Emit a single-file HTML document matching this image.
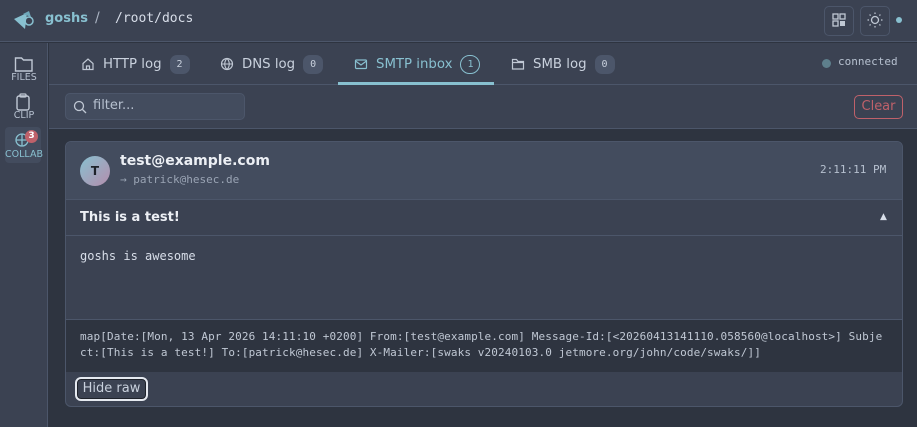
<!DOCTYPE html>
<html><head><meta charset="utf-8"><style>
*{box-sizing:border-box;margin:0;padding:0}
body{width:917px;height:427px;overflow:hidden;background:#2e3440;font-family:"DejaVu Sans","Liberation Sans",sans-serif;color:#d8dee9;position:relative}
.mono{font-family:"DejaVu Sans Mono","Liberation Mono",monospace}
.hdr{position:absolute;left:0;top:0;width:917px;height:42px;background:#3b4252;border-bottom:1px solid #4c566a}
.side{position:absolute;left:0;top:43px;width:48px;height:384px;background:#3b4252;border-right:1px solid #4c566a}
.tabs{position:absolute;left:49px;top:43px;width:868px;height:42px;background:#3b4252;border-bottom:1px solid #4c566a}
.filt{position:absolute;left:49px;top:85px;width:868px;height:44px;background:#3b4252;border-bottom:1px solid #4c566a}
.tab{position:absolute;top:0;height:42px;display:flex;align-items:center;font-size:13.3px;color:#c9d1dd}
.badge{display:inline-block;margin-left:8px;height:19px;min-width:20px;padding:0 6px;border-radius:7px;background:#4c566a;font-family:"DejaVu Sans Mono",monospace;font-size:10px;line-height:19px;text-align:center;color:#c9d1dd}
.card{position:absolute;left:65px;top:141px;width:838px;height:266px;background:#3b4252;border:1px solid #4c566a;border-radius:6px;overflow:hidden}
.sl{position:absolute;width:48px;text-align:center;font-size:9.5px;color:#b6c0cf}
</style></head><body>
<div class="hdr">
<svg style="position:absolute;left:13px;top:9px" width="22" height="22" viewBox="0 0 22 22"><path d="M1 10 L14 4 L12 20 Z" fill="#88c0d0"/><path d="M10 5 L16 2 L18 8 Z" fill="#6fa8bb"/><circle cx="16" cy="12" r="4" fill="none" stroke="#88c0d0" stroke-width="1.5"/></svg>
<span style="position:absolute;left:45px;top:11px;font-size:13px;font-weight:bold;color:#88c0d0">goshs</span>
<span style="position:absolute;left:95px;top:10px;font-size:14px;color:#aab3c2">/</span>
<span class="mono" style="position:absolute;left:115px;top:11px;font-size:13px;color:#d8dee9">/root/docs</span>
<div style="position:absolute;left:824px;top:6px;width:30px;height:30px;border:1px solid #4c566a;border-radius:5px"></div>
<svg style="position:absolute;left:832px;top:13px" width="14" height="14"><rect x="1" y="1" width="5" height="5" fill="none" stroke="#c0c8d4" stroke-width="1.3"/><rect x="8" y="1" width="5" height="5" fill="none" stroke="#c0c8d4" stroke-width="1.3"/><rect x="1" y="8" width="5" height="5" fill="none" stroke="#c0c8d4" stroke-width="1.3"/><rect x="8" y="8" width="5" height="5" fill="#c0c8d4"/></svg>
<div style="position:absolute;left:860px;top:6px;width:30px;height:30px;border:1px solid #4c566a;border-radius:5px"></div>
<svg style="position:absolute;left:867px;top:12px" width="16" height="16"><circle cx="8" cy="8" r="3.5" fill="none" stroke="#c0c8d4" stroke-width="1.3"/><g stroke="#c0c8d4" stroke-width="1.2"><path d="M8 0.5v1.5M8 14v1.5M0.5 8h1.5M14 8h1.5M2.6 2.6l1 1M12.4 12.4l1 1M2.6 13.4l1-1M12.4 3.6l1-1"/></g></svg>
<div style="position:absolute;left:896px;top:17px;width:6px;height:6px;border-radius:3px;background:#88c0d0"></div>
</div>
<div class="side">
<svg style="position:absolute;left:14px;top:12px" width="20" height="18"><path d="M1.5 3 h6 l2 2 h8.5 v11 h-16.5 Z" fill="none" stroke="#c0c8d4" stroke-width="1.4"/></svg>
<div class="sl" style="top:29px">FILES</div>
<svg style="position:absolute;left:15px;top:50px" width="18" height="18"><rect x="2" y="3" width="12" height="14" rx="2" fill="none" stroke="#c0c8d4" stroke-width="1.4"/><rect x="5" y="1" width="6" height="3" rx="1" fill="none" stroke="#c0c8d4" stroke-width="1.3"/></svg>
<div class="sl" style="top:67px">CLIP</div>
<div style="position:absolute;left:5px;top:84px;width:36px;height:36px;background:#434c5e;border-radius:4px"></div>
<svg style="position:absolute;left:14px;top:89px" width="16" height="16"><circle cx="8" cy="8" r="6" fill="none" stroke="#88c0d0" stroke-width="1.3"/><path d="M2 8h12M8 2v12" stroke="#88c0d0" stroke-width="1.3"/></svg>
<div style="position:absolute;left:25px;top:87px;width:13px;height:13px;border-radius:7px;background:#bf616a;font-size:9px;font-weight:bold;color:#fff;text-align:center;line-height:13px">3</div>
<div class="sl" style="top:106px;color:#88c0d0">COLLAB</div>
</div>
<div class="tabs">
<div class="tab" style="left:32px"><svg width="14" height="14" style="margin-right:8px"><path d="M2 6.5 L7 2 L12 6.5 V12.5 H2 Z M5.5 12.5 V9 H8.5 V12.5" fill="none" stroke="#c0c8d4" stroke-width="1.2"/></svg>HTTP log<span class="badge">2</span></div>
<div class="tab" style="left:171px"><svg width="14" height="14" style="margin-right:8px"><circle cx="7" cy="7" r="5.5" fill="none" stroke="#c0c8d4" stroke-width="1.2"/><path d="M1.5 7h11M7 1.5c-3 3-3 8 0 11M7 1.5c3 3 3 8 0 11" fill="none" stroke="#c0c8d4" stroke-width="1.1"/></svg>DNS log<span class="badge">0</span></div>
<div class="tab" style="left:305px;color:#88c0d0"><svg width="14" height="14" style="margin-right:8px"><rect x="1.5" y="3" width="11" height="8.5" rx="1" fill="none" stroke="#88c0d0" stroke-width="1.2"/><path d="M1.5 4 L7 8 L12.5 4" fill="none" stroke="#88c0d0" stroke-width="1.2"/></svg>SMTP inbox<span class="badge" style="background:none;border:1px solid #88c0d0;color:#88c0d0;line-height:17px;border-radius:10px">1</span></div>
<div style="position:absolute;left:289px;top:39px;width:156px;height:3px;background:#88c0d0"></div>
<div class="tab" style="left:462px"><svg width="14" height="14" style="margin-right:8px"><path d="M1.5 2.5 h4 l1.5 2 h5.5 v7.5 h-11 Z M1.5 5.5 h11" fill="none" stroke="#c0c8d4" stroke-width="1.2"/></svg>SMB log<span class="badge">0</span></div>
<div style="position:absolute;left:773px;top:16px;width:9px;height:9px;border-radius:5px;background:#5e7f8c"></div>
<span class="mono" style="position:absolute;left:789px;top:12px;font-size:11px;color:#b6c0cf">connected</span>
</div>
<div class="filt">
<div style="position:absolute;left:16px;top:8px;width:180px;height:27px;background:#434c5e;border:1px solid #4c566a;border-radius:5px"></div>
<svg style="position:absolute;left:24px;top:15px" width="14" height="14"><circle cx="6" cy="6" r="4.5" fill="none" stroke="#c0c8d4" stroke-width="1.3"/><path d="M9.5 9.5 L13 13" stroke="#c0c8d4" stroke-width="1.3"/></svg>
<span style="position:absolute;left:44px;top:13px;font-size:13px;color:#b6c0cf">filter...</span>
<div style="position:absolute;left:805px;top:10px;width:49px;height:24px;border:1px solid #bf616a;border-radius:5px;color:#bf616a;font-size:13px;text-align:center;line-height:22px">Clear</div>
</div>
<div class="card">
<div style="position:absolute;left:0;top:0;width:838px;height:58px;background:#434c5e;border-bottom:1px solid #4c566a"></div>
<div style="position:absolute;left:14px;top:14px;width:30px;height:30px;border-radius:15px;background:linear-gradient(135deg,#88c0d0,#b48ead);color:#1e222a;font-size:12px;font-weight:bold;text-align:center;line-height:30px">T</div>
<span style="position:absolute;left:54px;top:11px;font-size:14px;font-weight:bold;color:#eceff4">test@example.com</span>
<span class="mono" style="position:absolute;left:54px;top:31px;font-size:11px;color:#9aa4b4">→ patrick@hesec.de</span>
<span class="mono" style="position:absolute;left:754px;top:21px;font-size:11px;color:#b6c0cf">2:11:11 PM</span>
<div style="position:absolute;left:0;top:58px;width:838px;height:36px;border-bottom:1px solid #4c566a"></div>
<span style="position:absolute;left:14px;top:68px;font-size:13px;font-weight:bold;color:#eceff4">This is a test!</span>
<span style="position:absolute;left:814px;top:70px;font-size:9px;color:#d8dee9">▲</span>
<span class="mono" style="position:absolute;left:14px;top:107px;font-size:12px;color:#d8dee9">goshs is awesome</span>
<div style="position:absolute;left:0;top:177px;width:838px;height:53px;background:#2e3440;border-top:1px solid #4c566a"></div>
<div class="mono" style="position:absolute;left:14px;top:187px;font-size:11px;line-height:16px;color:#c0c8d4;white-space:pre;letter-spacing:0.12px">map[Date:[Mon, 13 Apr 2026 14:11:10 +0200] From:[test@example.com] Message-Id:[&lt;20260413141110.058560@localhost&gt;] Subje
ct:[This is a test!] To:[patrick@hesec.de] X-Mailer:[swaks v20240103.0 jetmore.org/john/code/swaks/]]</div>
<div style="position:absolute;left:9px;top:235px;width:73px;height:24px;border:2px solid #e5e9f0;border-radius:6px;background:#3b4252;box-shadow:inset 0 0 0 1px #1e222a;font-size:13px;color:#c9d1dd;text-align:center;line-height:20px">Hide raw</div>
</div>
</body></html>
